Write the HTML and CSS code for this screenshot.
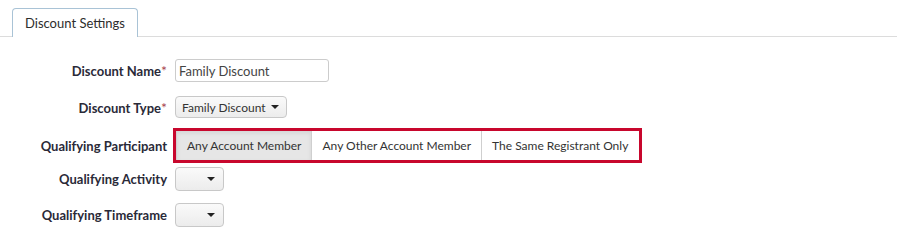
FILE: index.html
```html
<!DOCTYPE html>
<html>
<head>
<meta charset="utf-8">
<link rel="stylesheet" href="styles.css">
</head>
<body>
<div class="tabs">
  <div class="tab">Discount Settings</div>
</div>
<div class="form">
  <div class="row r1">
    <label class="lbl">Discount Name<span class="req">*</span></label>
    <div class="input">Family Discount</div>
  </div>
  <div class="row r2">
    <label class="lbl">Discount Type<span class="req">*</span></label>
    <div class="select wide"><span>Family Discount</span><span class="caret"></span></div>
  </div>
  <div class="row r3">
    <label class="lbl">Qualifying Participant</label>
    <div class="group">
      <div class="btn active">Any Account Member</div>
      <div class="btn">Any Other Account Member</div>
      <div class="btn">The Same Registrant Only</div>
    </div>
  </div>
  <div class="row r4">
    <label class="lbl">Qualifying Activity</label>
    <div class="select small"><span></span><span class="caret"></span></div>
  </div>
  <div class="row r5">
    <label class="lbl">Qualifying Timeframe</label>
    <div class="select small"><span></span><span class="caret"></span></div>
  </div>
</div>
</body>
</html>
```
FILE: styles.css
```css
html, body { margin: 0; padding: 0; background: #fff; }
body { font-family: Lato, "Open Sans", sans-serif; font-size: 12px; color: #333; width: 897px; height: 236px; overflow: hidden; }

.tabs { padding: 8px 2px 0 12px; border-bottom: 1px solid #dcdcdc; height: 28px; display: flex; }
.tab { box-sizing: border-box; width: 126px; height: 29px; border: 1px solid #a9c3d6; border-bottom: none; border-radius: 4px 4px 0 0; background: #fff; display: flex; align-items: center; justify-content: center; font-size: 13px; color: #2d2d2d; padding-bottom: 1px; }

.form { display: flex; flex-direction: column; }
.row { display: flex; align-items: center; }
.lbl { width: 167px; flex: none; text-align: right; font-size: 13px; font-weight: bold; color: #2a2a38; margin-right: 8px; white-space: nowrap; }
.req { color: #a9444f; font-weight: normal; font-size: 14px; }
.r1 { margin-top: 22px; height: 23px; }
.r2 { margin-top: 14px; height: 22px; }
.r3 { margin-top: 10px; height: 35px; }
.r4 { margin-top: 4px; height: 24px; }
.r5 { margin-top: 12px; height: 24px; }

.input { box-sizing: border-box; width: 154px; height: 23px; border: 1px solid #ccc; border-radius: 3px; padding: 0 3px; display: flex; align-items: center; font-size: 13px; color: #444; white-space: nowrap; }

.select { box-sizing: border-box; height: 100%; border: 1px solid #c8c8c8; border-radius: 4px; background: linear-gradient(#fafafa, #ececec); display: flex; align-items: center; justify-content: space-between; padding: 0 7px 0 6px; color: #333; white-space: nowrap; }
.select.wide { width: 112px; }
.select.small { width: 49px; padding-right: 8px; }
.caret { width: 0; height: 0; border-left: 4px solid transparent; border-right: 4px solid transparent; border-top: 4px solid #222; }

.group { box-sizing: border-box; height: 35px; display: flex; border: 3px solid #c8072d; margin-left: -2px; }
.btn { display: flex; align-items: center; padding: 0 10px; background: #fff; color: #333; border-left: 1px solid #cfcfcf; white-space: nowrap; }
.btn:first-child { border-left: 1px solid #d0d0d0; background: #e6e6e6; box-shadow: inset 0 2px 4px rgba(0,0,0,0.08); }
.btn:last-child { padding-right: 11px; }
```
